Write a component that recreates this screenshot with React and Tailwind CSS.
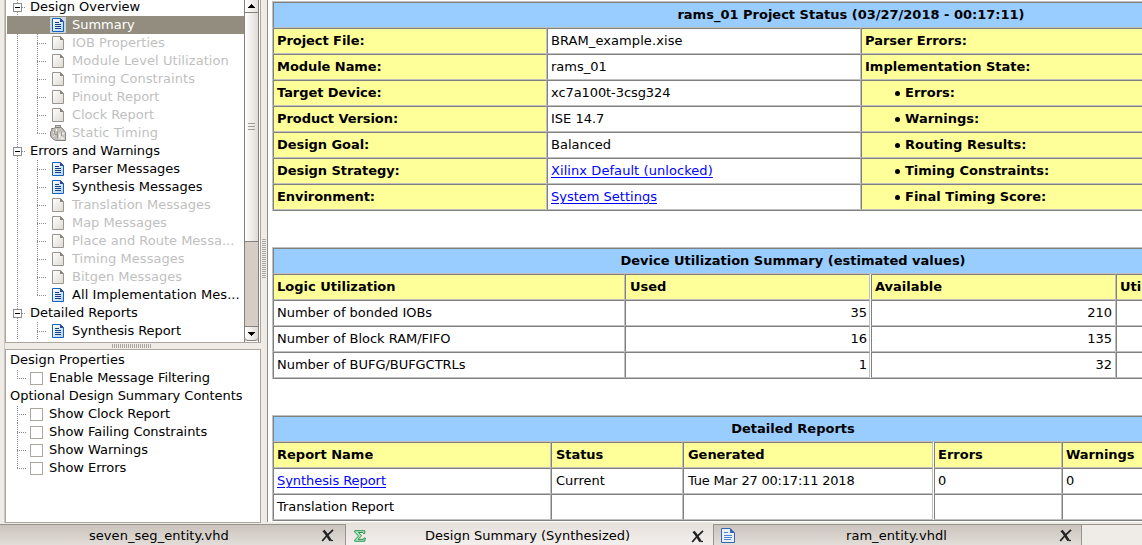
import React from "react";

const TREE = [
  { section: true, label: "Design Overview" },
  { label: "Summary", icon: "doc", selected: true, track: "tracking-[-0.02px]" },
  { label: "IOB Properties", icon: "blank" },
  { label: "Module Level Utilization", icon: "blank", track: "tracking-[0.08px]" },
  { label: "Timing Constraints", icon: "blank", track: "tracking-[0.04px]" },
  { label: "Pinout Report", icon: "blank", track: "tracking-[-0.04px]" },
  { label: "Clock Report", icon: "blank", track: "tracking-[-0.04px]" },
  { label: "Static Timing", icon: "clock", last: true, track: "tracking-[0.06px]" },
  { section: true, label: "Errors and Warnings", track: "tracking-[-0.08px]" },
  { label: "Parser Messages", icon: "doc", track: "tracking-[-0.04px]" },
  { label: "Synthesis Messages", icon: "doc" },
  { label: "Translation Messages", icon: "blank" },
  { label: "Map Messages", icon: "blank", track: "tracking-[-0.04px]" },
  { label: "Place and Route Messa...", icon: "blank" },
  { label: "Timing Messages", icon: "blank", track: "tracking-[0.06px]" },
  { label: "Bitgen Messages", icon: "blank" },
  { label: "All Implementation Mes...", icon: "doc", last: true, track: "tracking-[0.07px]" },
  { section: true, label: "Detailed Reports", track: "tracking-[-0.05px]" },
  { label: "Synthesis Report", icon: "doc", track: "tracking-[-0.06px]" },
];

function Dots({ d, color = "#8c8c8c" }) {
  return <path d={d} stroke={color} strokeWidth="1" strokeDasharray="1 1" fill="none" />;
}

function DocIcon({ blank }) {
  return (
    <svg width="16" height="16" viewBox="0 0 16 16" className="block shrink-0">
      <defs>
        <linearGradient id="paperBlue" x1="0" y1="0" x2="1" y2="1">
          <stop offset="0" stopColor="#ffffff" />
          <stop offset="1" stopColor="#b4d0ec" />
        </linearGradient>
        <linearGradient id="paperGray" x1="0" y1="0" x2="1" y2="1">
          <stop offset="0" stopColor="#ffffff" />
          <stop offset="1" stopColor="#dedad4" />
        </linearGradient>
      </defs>
      <path
        d="M2.5 1.5H10.5L13.5 4.5V14.5H2.5Z"
        fill={blank ? "url(#paperGray)" : "url(#paperBlue)"}
        stroke={blank ? "#99958f" : "#1263bd"}
      />
      <path d="M10 1L14 5H10Z" fill={blank ? "#88847e" : "#30479a"} />
      {!blank && <path d="M5 5.5H9M5 7.5H11M5 9.5H11M5 11.5H11" stroke="#143f86" />}
    </svg>
  );
}

function ClockIcon() {
  return (
    <svg width="16" height="16" viewBox="0 0 16 16" className="block shrink-0">
      <path d="M5 0H11V3H5Z" fill="#8f8b87" />
      <path d="M6 1.5H10" stroke="#c9c6c3" />
      <path
        d="M1.5 3.5H3.5L5.5 2.5H11L13 4L15.5 7.5V15.5H5.5L2.5 13.5L.5 11V7L2 5Z"
        fill="#c2bfbb"
        stroke="#85817c"
      />
      <path d="M8.5 7.5H14.5V14.5H8.5Z" fill="#dedbd8" />
      <path d="M3 7.5H5M6.5 4V6M3.5 11.5L5 10.5M9.5 9.5V12M12 8.5H13.5M11 13.5H13" stroke="#f7f7f7" />
      <path d="M4.5 5.5V9M7.5 6.5V13M11.5 7V11M5 9.5H7M12.5 11H14" stroke="#9b9792" />
    </svg>
  );
}

function TreeRow({ row }) {
  if (row.section) {
    return (
      <div className="flex h-[18px] shrink-0 items-center">
        <svg width="23" height="18" className="block shrink-0">
          <Dots d="M10.5 0V5M10.5 14V18" />
          <Dots d="M15 9.5H19" />
          <rect x="6.5" y="5.5" width="8" height="8" fill="#fff" stroke="#8c8c8c" />
          <path d="M8 9.5H13" stroke="#000" />
        </svg>
        <span className={row.track || ""}>{row.label}</span>
      </div>
    );
  }
  return (
    <div
      className={
        "flex h-[18px] shrink-0 items-center " +
        (row.selected ? "bg-[#928d7e] text-white" : row.icon === "doc" ? "text-black" : "text-[#bfbfbf]")
      }
    >
      <svg width="43" height="18" className="block shrink-0">
        <Dots d="M10.5 0V18" />
        <Dots d={row.last ? "M30.5 0V10" : "M30.5 0V18"} />
        <Dots d="M30 9.5H39" />
      </svg>
      <div className={"mr-[6px] flex h-4 w-4 shrink-0 " + (row.selected ? "bg-[#c9d7e2]" : "")}>
        {row.icon === "clock" ? <ClockIcon /> : <DocIcon blank={row.icon === "blank"} />}
      </div>
      <span className={row.track || ""}>{row.label}</span>
    </div>
  );
}

function Grip({ vertical }) {
  return vertical ? (
    <svg width="4" height="40" className="block">
      <path d="M2 0V40" stroke="#aaa6a2" strokeWidth="4" strokeDasharray="1 1" />
    </svg>
  ) : (
    <svg width="40" height="4" className="block">
      <path d="M0 2H40" stroke="#aaa6a2" strokeWidth="4" strokeDasharray="1 1" />
    </svg>
  );
}

function ScrollBar() {
  return (
    <div className="flex w-[15px] shrink-0 flex-col border-x border-[#85807a] bg-[#d6cdc5]">
      <div className="flex h-[13px] items-center justify-center border-b border-[#85807a] bg-linear-to-r from-white to-[#e4e0dc]">
        <svg width="7" height="4" className="block"><path d="M3 0H4V1H5V2H6V3H7V4H0V3H1V2H2V1H3Z" fill="#000" /></svg>
      </div>
      <div className="flex h-[229px] items-center justify-center border-b border-[#85807a] bg-linear-to-r from-white to-[#dfdbd6]">
        <svg width="7" height="8" className="block"><path d="M0 .5H7M0 3.5H7M0 6.5H7" stroke="#a09b96" /></svg>
      </div>
      <div className="h-[84px]" />
      <div className="flex h-[15px] items-center justify-center rounded-b-sm border-y border-[#85807a] bg-linear-to-r from-white to-[#dfdbd6]">
        <svg width="7" height="4" className="block"><path d="M0 0H7V1H6V2H5V3H4V4H3V3H2V2H1V1H0Z" fill="#000" /></svg>
      </div>
      <div className="flex-1 bg-white" />
    </div>
  );
}

function Option({ label, last, first }) {
  return (
    <div className="flex h-[18px] items-center">
      <svg width="24" height="18" className="block shrink-0">
        <Dots d={"M11.5 " + (first ? 1 : 0) + (last ? "V10" : "V18")} />
        <Dots d="M11 9.5H20" />
      </svg>
      <div className="mt-[1px] mr-[6px] h-[13px] w-[13px] border border-[#aca69f] bg-white" />
      <span className="tracking-[-0.04px]">{label}</span>
    </div>
  );
}

function Cell({ w, head, right, gap, link, bullet, children }) {
  return (
    <div className={"flex h-[26px] shrink-0 " + w + (gap ? " pr-px" : "")}>
      <div
        className={
          "flex h-[26px] w-full items-center border-t border-l border-t-[#808080] border-l-[#808080] border-r border-b border-r-[#c0c0c0] border-b-[#c0c0c0] pl-[3px] " +
          (gap ? "pr-[2px] " : "pr-[3px] ") +
          (head ? "bg-[#ffff99] font-bold " : "bg-white ") +
          (right ? "justify-end" : "")
        }
      >
        {bullet && <span className="mt-px mr-[5px] ml-[30px] h-[5px] w-[5px] rounded-full bg-black" />}
        {link ? <span className="text-[#0000ff] underline underline-offset-2">{children}</span> : children}
      </div>
    </div>
  );
}

function Table({ w, title, children }) {
  return (
    <div className={"shrink-0 border-t border-l border-[#c0c0c0] " + w}>
      <div className="border-b border-[#808080]">
        <div className="flex h-[26px] items-center justify-center border-t border-l border-b border-t-[#808080] border-l-[#808080] border-b-[#c0c0c0] bg-[#99ccff] pr-[2px] pb-px font-bold">
          {title}
        </div>
        {children}
      </div>
    </div>
  );
}

const STATUS = [
  ["Project File:", "BRAM_example.xise", "Parser Errors:"],
  ["Module Name:", "rams_01", "Implementation State:"],
  ["Target Device:", "xc7a100t-3csg324", "Errors:"],
  ["Product Version:", "ISE 14.7", "Warnings:"],
  ["Design Goal:", "Balanced", "Routing Results:"],
  ["Design Strategy:", "Xilinx Default (unlocked)", "Timing Constraints:"],
  ["Environment:", "System Settings", "Final Timing Score:"],
];

const USAGE = [
  ["Number of bonded IOBs", "35", "210"],
  ["Number of Block RAM/FIFO", "16", "135"],
  ["Number of BUFG/BUFGCTRLs", "1", "32"],
];

function CloseIcon() {
  return (
    <svg width="13" height="13" viewBox="0 0 13 13" className="block shrink-0">
      <path d="M2.5 1.5L5 4.5L9.5 11.5" stroke="#222" strokeWidth="2.6" fill="none" />
      <path d="M12 .8L6 6.5L1.2 12" stroke="#222" strokeWidth="1.8" fill="none" />
      <path d="M9.5 11.5H12" stroke="#222" strokeWidth="1.2" />
    </svg>
  );
}

function SigmaIcon() {
  return (
    <svg width="12" height="12" viewBox="0 0 12 12" className="block shrink-0">
      <path d="M.7.7H10.8V3.5H9.5L9 2.5H4.5L7.6 5.8L4 9.3H9.3L10 8H11.3L10.8 11.2H.7V10L4.6 6L.7 2Z" fill="#b5e4c6" stroke="#269653" strokeWidth="1" />
    </svg>
  );
}

export default function App() {
  return (
    <div className="flex h-[545px] w-[1142px] flex-col overflow-hidden bg-[#efebe7] font-['DejaVu_Sans',sans-serif] text-[13px] leading-[18px] whitespace-nowrap text-black">
      <div className="flex h-[523px] shrink-0">
        <div className="ml-[4px] flex w-[257px] shrink-0 flex-col border-l border-[#cbc6c0]">
          <div className="flex h-[343px] shrink-0 overflow-hidden border-x border-b border-[#aca69f] bg-white">
            <div className="flex flex-1 flex-col overflow-hidden pl-px">
              <div className="-mt-[2px] flex flex-col">
                {TREE.map((row, i) => (
                  <TreeRow key={i} row={row} />
                ))}
              </div>
            </div>
            <ScrollBar />
            <div className="w-px" />
          </div>
          <div className="flex h-[6px] shrink-0 items-center pl-[107px]">
            <Grip />
          </div>
          <div className="flex h-[174px] shrink-0 flex-col border border-[#aca69f] bg-white pt-[1px]">
            <div className="pl-[4px]">Design Properties</div>
            <Option label="Enable Message Filtering" first last />
            <div className="pl-[4px] tracking-[-0.03px]">Optional Design Summary Contents</div>
            <Option label="Show Clock Report" first />
            <Option label="Show Failing Constraints" />
            <Option label="Show Warnings" />
            <Option label="Show Errors" last />
          </div>
        </div>
        <div className="flex w-[6px] shrink-0 items-start justify-center pt-[239px]">
          <Grip vertical />
        </div>
        <div className="flex h-[522px] flex-1 flex-col gap-[36px] overflow-hidden border-l border-[#908c88] bg-white pt-px pl-[4px]">
          <Table w="w-[1158px]" title="rams_01 Project Status (03/27/2018 - 00:17:11)">
            {STATUS.map(([a, b, c], i) => (
              <div key={a} className="flex">
                <Cell w="w-[274px]" head><span className="tracking-[-0.06px]">{a}</span></Cell>
                <Cell w="w-[314px]" link={i > 4}><span className={i === 5 ? "tracking-[0.07px]" : i === 0 ? "tracking-[0.08px]" : i === 2 ? "tracking-[-0.08px]" : ""}>{b}</span></Cell>
                <Cell w="w-[569px]" head bullet={i > 1}>{c}</Cell>
              </div>
            ))}
          </Table>
          <Table w="w-[1042px]" title="Device Utilization Summary (estimated values)">
            <div className="flex">
              <Cell w="w-[352px]" head>Logic Utilization</Cell>
              <Cell w="w-[246px]" head gap><span className="pl-px">Used</span></Cell>
              <Cell w="w-[245px]" head>Available</Cell>
              <Cell w="w-[198px]" head>Utilization</Cell>
            </div>
            {USAGE.map(([a, b, c]) => (
              <div key={a} className="flex">
                <Cell w="w-[352px]"><span className="tracking-[-0.04px]">{a}</span></Cell>
                <Cell w="w-[246px]" right gap>{b}</Cell>
                <Cell w="w-[245px]" right>{c}</Cell>
                <Cell w="w-[198px]" />
              </div>
            ))}
          </Table>
          <Table w="w-[1042px]" title="Detailed Reports">
            <div className="flex">
              <Cell w="w-[278px]" head>Report Name</Cell>
              <Cell w="w-[132px]" head><span className="pl-px tracking-[-0.05px]">Status</span></Cell>
              <Cell w="w-[251px]" head gap><span className="pl-px tracking-[-0.05px]">Generated</span></Cell>
              <Cell w="w-[128px]" head>Errors</Cell>
              <Cell w="w-[252px]" head><span className="tracking-[-0.08px]">Warnings</span></Cell>
            </div>
            <div className="flex">
              <Cell w="w-[278px]" link><span className="tracking-[-0.06px]">Synthesis Report</span></Cell>
              <Cell w="w-[132px]"><span className="pl-px">Current</span></Cell>
              <Cell w="w-[251px]" gap><span className="pl-px tracking-[-0.2px]">Tue Mar 27 00:17:11 2018</span></Cell>
              <Cell w="w-[128px]">0</Cell>
              <Cell w="w-[252px]">0</Cell>
            </div>
            <div className="flex">
              <Cell w="w-[278px]"><span className="tracking-[-0.06px]">Translation Report</span></Cell>
              <Cell w="w-[132px]" />
              <Cell w="w-[251px]" gap />
              <Cell w="w-[128px]" />
              <Cell w="w-[252px]" />
            </div>
          </Table>
        </div>
      </div>
      <div className="flex h-[22px] shrink-0 items-stretch">
        <div className="mt-px flex w-[346px] items-center border-t border-r border-[#98938d] bg-linear-to-b from-[#cbc4bd] to-[#e2ddd8] pt-px pl-[89px]">
          <span className="flex-1 tracking-[0.05px]">seven_seg_entity.vhd</span>
          <div className="mr-[11px]"><CloseIcon /></div>
        </div>
        <div className="flex w-[367px] items-center bg-linear-to-b from-[#e6e0db] to-[#f3efec] pt-[4px] pl-[8px]">
          <SigmaIcon />
          <span className="ml-[59px] flex-1">Design Summary (Synthesized)</span>
          <div className="mr-[9px]"><CloseIcon /></div>
        </div>
        <div className="mt-px flex w-[369px] items-center border-x border-t border-[#98938d] bg-linear-to-b from-[#cbc4bd] to-[#e2ddd8] pl-[6px]">
          <svg width="16" height="17" viewBox="0 0 16 17" className="block shrink-0">
            <path d="M1.5 1.5H10L14.5 6V15.5H1.5Z" fill="#e8f1fc" stroke="#3565b0" />
            <path d="M10 1V6H15Z" fill="#3565b0" />
            <path d="M4 5.5H8M4 8.5H12M4 10.5H12M4 12.5H11" stroke="#4d86d2" />
          </svg>
          <span className="ml-[110px] flex-1 pt-px tracking-[0.05px]">ram_entity.vhdl</span>
          <div className="mt-px mr-[9px]"><CloseIcon /></div>
        </div>
        <div className="mt-px flex-1 border-t border-[#98938d]" />
      </div>
    </div>
  );
}
